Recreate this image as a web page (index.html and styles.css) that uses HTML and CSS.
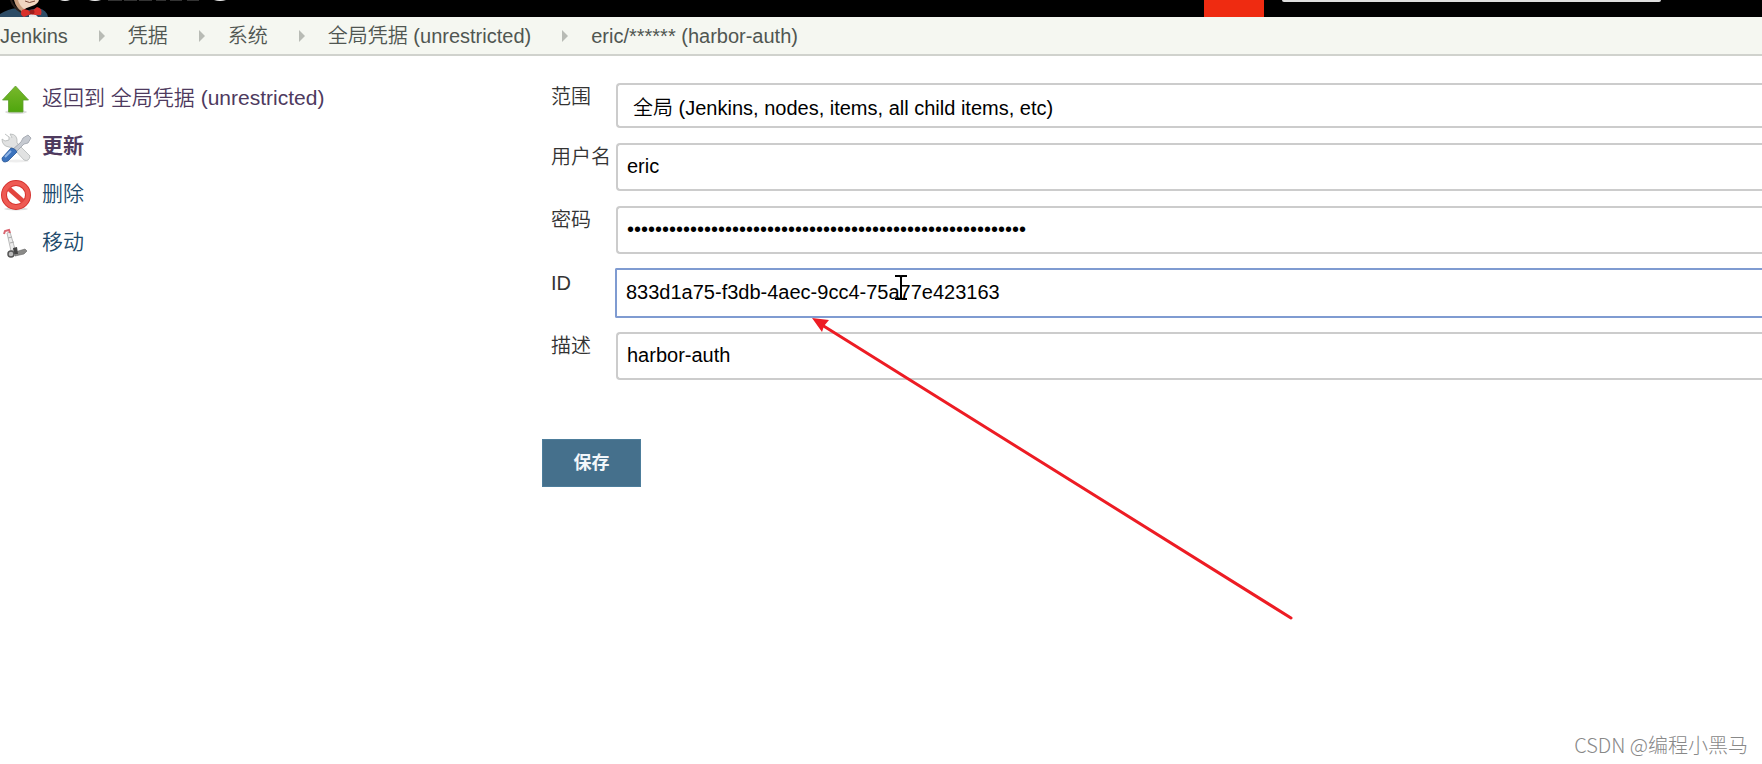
FILE: index.html
```html
<!DOCTYPE html>
<html lang="zh-CN">
<head>
<meta charset="utf-8">
<title>更新凭据 [Jenkins]</title>
<link rel="stylesheet" href="styles.css">
</head>
<body>
<header class="header">
  <a class="brand" href="#" aria-label="Jenkins">
    <svg class="butler" width="52" height="17" viewBox="0 0 52 17" aria-hidden="true">
      <path d="M0 17V14Q8 9 17 8L24 11L38 8Q47 10 48 17Z" fill="#2c4c66"/>
      <path d="M14 0H20L26 8L22 12Q16 8 14 0Z" fill="#c99f7f"/>
      <path d="M18 0H39Q38 4 32 6L24 9Q19 5 18 0Z" fill="#f1d6c0"/>
      <path d="M11 0Q13 7 21 12" fill="none" stroke="#2e231e" stroke-width="2"/>
      <path d="M25 1Q29 4 35 1" fill="none" stroke="#7d4b3c"/>
      <path d="M29 15L34 13L38 17H29Z" fill="#e8e8ea"/>
      <path d="M22 10Q26 8 31 12L37 7Q43 8 41 15L35 15L31 14L24 17Q19 15 22 10Z" fill="#d9302b"/>
      <circle cx="32" cy="12" r="2.500" fill="#9f1d1c"/>
    </svg>
    <svg class="wordmark" width="170" height="2" viewBox="0 0 170 2" aria-hidden="true">
      <path d="M2 0H12Q7 2 2 0ZM31 0H43Q37 2 31 0ZM156 0H168Q162 2 156 0Z" fill="#eee"/>
      <path d="M50 0H64V1H50ZM66 0H79V1H66ZM81 0H94V1H81ZM98 0H108V1H98ZM112 0H124V1H112ZM129 0H141V1H129Z" fill="#333"/>
    </svg>
  </a>
  <span class="alert"></span>
  <input class="search" type="search" aria-label="查找">
</header>

<nav class="crumbs" aria-label="breadcrumb">
  <a href="#">Jenkins</a><i class="sep"></i>
  <a href="#">凭据</a><i class="sep"></i>
  <a href="#">系统</a><i class="sep"></i>
  <a href="#">全局凭据 (unrestricted)</a><i class="sep"></i>
  <a href="#">eric/****** (harbor-auth)</a>
</nav>

<div class="page">
  <aside class="tasks">
    <a class="task visited" href="#">
      <svg width="32" height="32" viewBox="0 0 32 32" aria-hidden="true">
        <defs><linearGradient id="green" x2="0" y2="1"><stop stop-color="#79b82c"/><stop offset="1" stop-color="#4fa60d"/></linearGradient></defs>
        <ellipse cx="16" cy="29" rx="11" ry="2" fill="#ddd"/>
        <path d="M15.500 3L28.500 17H23V29H8.500V17H2.500Z" fill="url(#green)" stroke="#5f9f30" stroke-width=".8"/>
      </svg>
      <span>返回到 全局凭据 (unrestricted)</span>
    </a>
    <a class="task visited current" href="#">
      <svg width="32" height="32" viewBox="0 0 32 32" aria-hidden="true">
        <ellipse cx="16" cy="30" rx="13" ry="1.500" fill="#eee"/>
        <path d="M5 3L9 6L9 9L5 10L2 8Q2 15 9 16L13 17L24 29Q29 31 30 25L17 12Q18 3 10 3L12 7" fill="#e1e2e2" stroke="#b3b6b6" stroke-width=".8"/>
        <path d="M28 4L23 7L21 11L12 19L15 22L24 13L28 12L31 7Z" fill="#c6cad1" stroke="#9aa0a8" stroke-width=".8"/>
        <path d="M11 17Q15 17 17 21L8 30Q2 33 2 27Z" fill="#3c73bd" stroke="#285797" stroke-width=".8"/>
        <path d="M11 20L5 26" stroke="#8fb5e6" stroke-width="2"/>
      </svg>
      <span>更新</span>
    </a>
    <a class="task" href="#">
      <svg width="32" height="32" viewBox="0 0 32 32" aria-hidden="true">
        <ellipse cx="16" cy="30" rx="12" ry="1.500" fill="#ddd"/>
        <circle cx="16" cy="16" r="12" fill="#fff" stroke="#d5322e" stroke-width="6"/>
        <path d="M7 8L25 24" stroke="#e2443e" stroke-width="5"/>
        <circle cx="16" cy="16" r="12" fill="none" stroke="#ee5a53" stroke-width="4"/>
      </svg>
      <span>删除</span>
    </a>
    <a class="task" href="#">
      <svg width="32" height="32" viewBox="0 0 32 32" aria-hidden="true">
        <path d="M15 25L25 22L27 24L24 27L15 29Z" fill="#8a8a88" stroke="#666" stroke-width=".6"/>
        <path d="M7 6L10 5L15 22L11 24Z" fill="#ececec" stroke="#aaa" stroke-width=".8"/>
        <path d="M8 11L12 10M10 16L14 15" stroke="#aaa"/>
        <path d="M4 7L5 4L9 3L10 6" fill="none" stroke="#d96570" stroke-width="2"/>
        <path d="M13 21L17 20L18 27L14 27Z" fill="#444"/>
        <circle cx="11" cy="27" r="3" fill="#bbb" stroke="#555" stroke-width="1.500"/>
      </svg>
      <span>移动</span>
    </a>
  </aside>

  <main class="main">
    <form class="form">
      <label for="scope">范围</label>
      <select id="scope" class="field scope"><option>全局 (Jenkins, nodes, items, all child items, etc)</option></select>
      <label for="user">用户名</label>
      <input id="user" class="field" type="text" value="eric">
      <label for="pass">密码</label>
      <input id="pass" class="field" type="password" value="xxxxxxxxxxxxxxxxxxxxxxxxxxxxxxxxxxxxxxxxxxxxxxxxxxxxxxxxx">
      <label for="cid">ID</label>
      <input id="cid" class="field active" type="text" value="833d1a75-f3db-4aec-9cc4-75a77e423163">
      <label for="desc">描述</label>
      <input id="desc" class="field" type="text" value="harbor-auth">
      <button class="save" type="button">保存</button>
    </form>
  </main>
</div>

<svg class="annotation" width="1300" height="630" viewBox="0 0 1300 630" aria-hidden="true">
  <path d="M822 325L1291 618" stroke="#ed1c24" stroke-width="3" stroke-linecap="round"/>
  <path d="M812 318L829 320L824 326L822 332Z" fill="#ed1c24"/>
  <path d="M895 276H900L901 277L902 276H907M901 277V298M895 299H900L901 298L902 299H907" fill="none" stroke="#000" stroke-width="2"/>
</svg>
<div class="watermark">CSDN @编程小黑马</div>
</body>
</html>
```
FILE: styles.css
```css
* {
  box-sizing: border-box;
}

body {
  margin: 0;
  min-height: 100vh;
  position: relative;
  overflow: hidden;
  background: #fff;
  color: #333;
  font: 20px/24px "Liberation Sans", "Noto Sans CJK SC", sans-serif;
  font-weight: 350;
}

a {
  text-decoration: none;
}

.header {
  display: flex;
  align-items: flex-start;
  height: 17px;
  overflow: hidden;
  background: #000;
}

.brand {
  display: flex;
  flex: 1;
  gap: 6px;
}

.alert {
  width: 60px;
  height: 17px;
  margin-right: 18px;
  background: #ef2b11;
}

.search {
  width: 379px;
  height: 2px;
  margin-right: 101px;
  padding: 0;
  border: 0;
  border-radius: 0 0 4px 4px;
  background: #ddd;
}

.crumbs {
  display: flex;
  align-items: center;
  height: 39px;
  padding-top: 1px;
  border-bottom: 2px solid #d0d2cd;
  background: #f5f7f1;
  white-space: nowrap;
}

.crumbs a {
  color: #505651;
}

.sep {
  margin: 0 23px 0 31px;
  border-left: 6px solid #b8bbb5;
  border-top: 6px solid transparent;
  border-bottom: 6px solid transparent;
}

.page {
  display: flex;
  padding-top: 27px;
}

.tasks {
  display: flex;
  flex-direction: column;
  gap: 16px;
  width: 542px;
  flex: none;
}

.task {
  display: flex;
  align-items: center;
  gap: 10px;
  height: 32px;
  color: #204a6c;
  font-size: 21px;
}

.task span {
  padding-bottom: 2px;
}

.task.visited {
  color: #4e3a5e;
}

.current {
  font-weight: 700;
}

.main {
  flex: 1;
}

.form {
  display: grid;
  grid-template-columns: 65px 1fr;
  row-gap: 15px;
  padding-left: 9px;
}

.form label {
  padding-top: 2px;
  white-space: nowrap;
}

.field {
  width: 100%;
  height: 48px;
  margin: 0;
  padding: 0 8px 2px 9px;
  border: 2px solid #ccc;
  border-right: 0;
  border-radius: 4px 0 0 4px;
  outline: 0;
  background: #fff;
  color: #000;
  font: inherit;
  appearance: none;
}

.scope {
  height: 45px;
  padding: 4px 14px 0 15px;
}

.active {
  width: calc(100% + 1px);
  height: 50px;
  margin: -1px 0 -1px -1px;
  border-color: #7f9bd1;
  border-radius: 2px 0 0 2px;
}

.save {
  grid-column: 1 / -1;
  width: 99px;
  height: 48px;
  margin: 44px 0 0 -9px;
  border: 1px solid #4d7d9b;
  background: #45708c;
  color: #f2f6fa;
  font: 700 18px/24px "Liberation Sans", "Noto Sans CJK SC", sans-serif;
}

.annotation {
  position: absolute;
  top: 0;
  left: 0;
  pointer-events: none;
}

.watermark {
  position: absolute;
  right: 14px;
  bottom: 7px;
  color: #888;
  font: 300 20px/24px "Noto Sans CJK SC", sans-serif;
}
```
